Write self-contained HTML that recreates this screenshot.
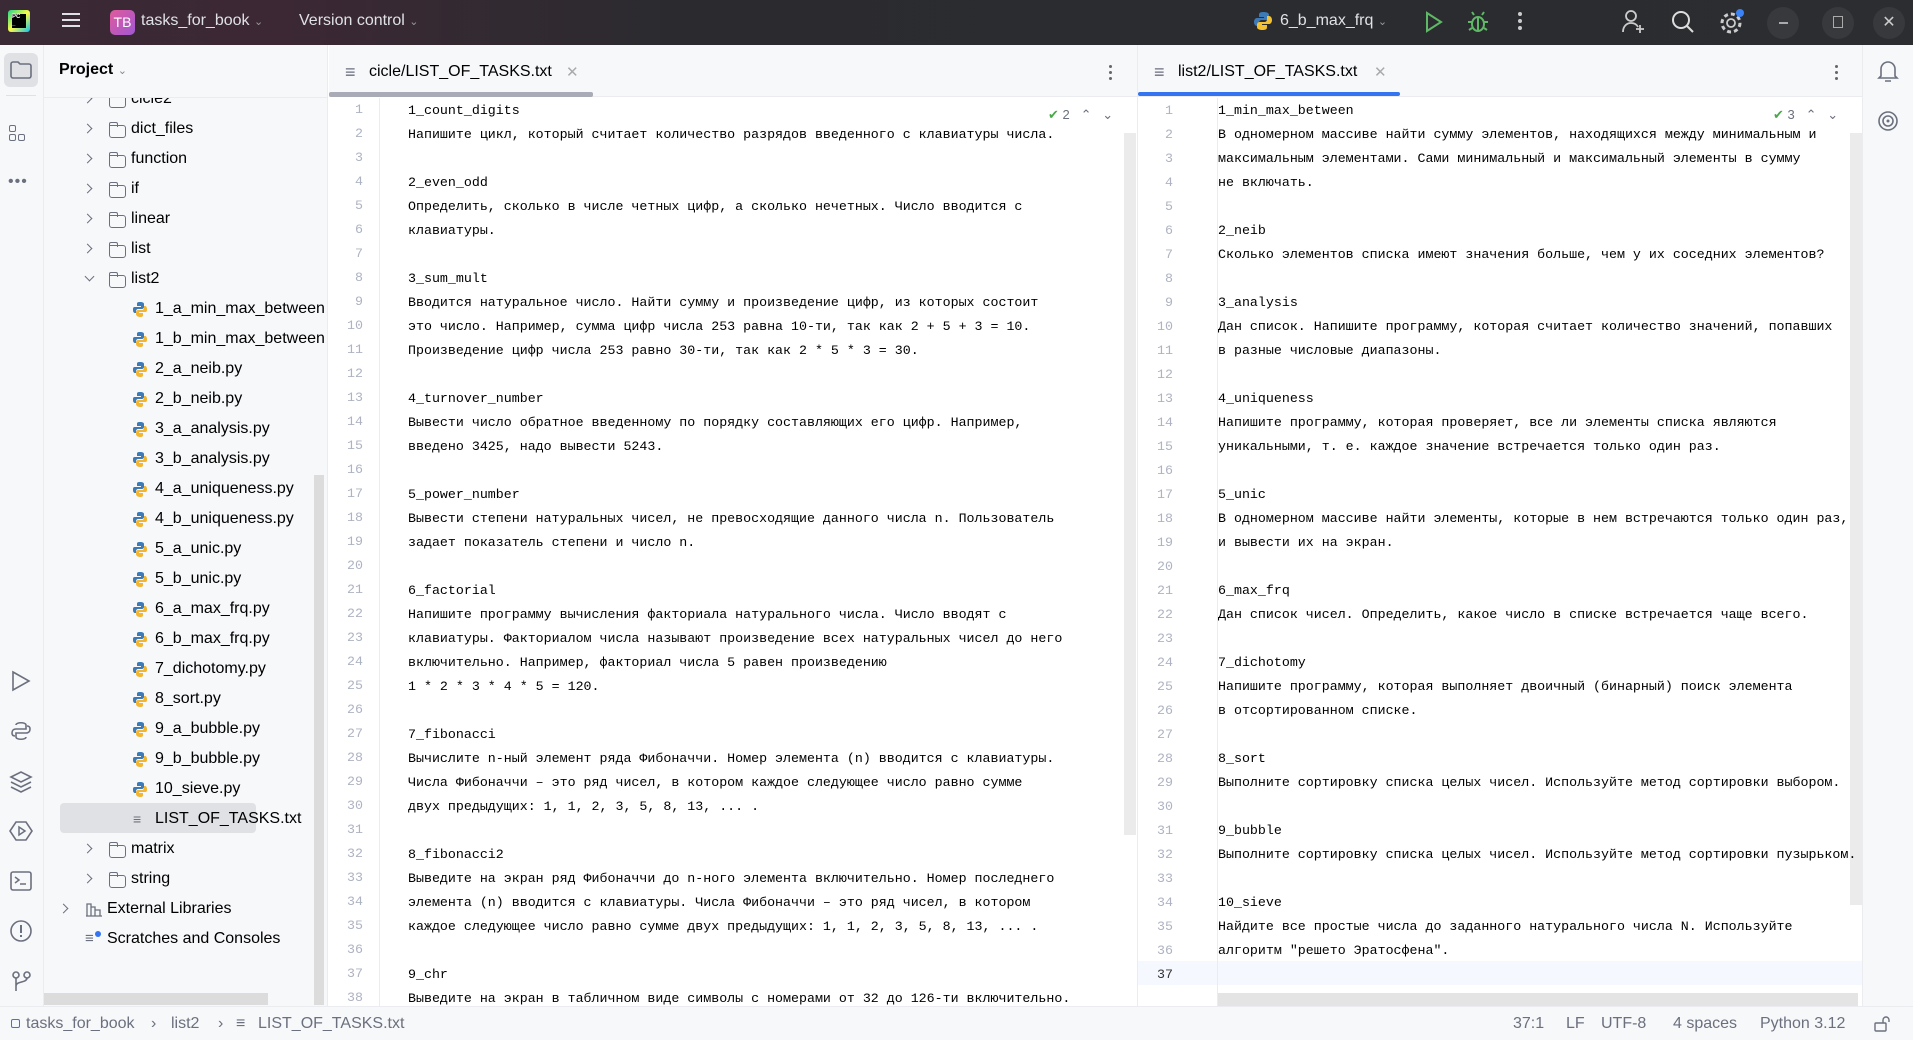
<!DOCTYPE html>
<html><head><meta charset="utf-8">
<style>
*{margin:0;padding:0;box-sizing:border-box}
body{width:1913px;height:1040px;overflow:hidden;background:#fff;font-family:"Liberation Sans","Noto Sans CJK SC",sans-serif;position:relative;color:#000}
.a{position:absolute}
#title{left:0;top:0;width:1913px;height:45px;background:linear-gradient(90deg,#3a2a36 0%,#3b2834 15%,#2b2b2f 35%,#2b2d30 100%);color:#dfe1e5;font-size:16px}
#lbar{left:0;top:45px;width:44px;height:961px;background:#f7f8fa;border-right:1px solid #ebecf0}
#rbar{left:1862px;top:45px;width:51px;height:961px;background:#f7f8fa;border-left:1px solid #ebecf0}
#proj{left:44px;top:45px;width:284px;height:961px;background:#f7f8fa;border-right:1px solid #ebecf0;overflow:hidden}
.row{position:absolute;height:30px;line-height:30px;font-size:16px;color:#000;white-space:nowrap}
.chev{position:absolute;width:7px;height:7px;border-right:1.5px solid #6c707e;border-bottom:1.5px solid #6c707e}
.fold{position:absolute;width:17px;height:13px;border:1.4px solid #6c707e;border-radius:3px;border-top-left-radius:1px}
.fold:before{content:"";position:absolute;left:-1.4px;top:-4px;width:7px;height:4px;border:1.4px solid #6c707e;border-bottom:none;border-radius:2px 2px 0 0}
.tabs{top:45px;height:52px;background:#f7f8fa;border-bottom:1px solid #ebecf0}
pre{font-family:"Liberation Mono","Noto Sans CJK SC",monospace;font-size:13.3px;line-height:24px;position:absolute;white-space:pre}
.ln{color:#aeb3c2;text-align:right}
#status{left:0;top:1006px;width:1913px;height:34px;background:#f7f8fa;border-top:1px solid #ebecf0;font-size:16px;color:#6c707e;line-height:34px}
</style></head><body>

<div id="title" class="a">
  <div class="a" style="left:8px;top:10px;width:22px;height:22px;background:linear-gradient(135deg,#21d789,#fcf84a 50%,#07c3f2);border-radius:3px"><div class="a" style="left:4px;top:4px;width:14px;height:14px;background:#000;color:#fff;font-size:6px;font-weight:bold;line-height:7px">PC<br>_</div></div>
  <div class="a" style="left:62px;top:13px;width:18px;height:2px;background:#dfe1e5;box-shadow:0 6px 0 #dfe1e5,0 12px 0 #dfe1e5"></div>
  <div class="a" style="left:110px;top:10px;width:25px;height:25px;border-radius:5px;background:linear-gradient(135deg,#e05a9a,#a157d4);color:#fff;font-size:14px;line-height:25px;text-align:center">TB</div>
  <div class="a" style="left:141px;top:12px">tasks_for_book <span style="font-size:11px;color:#9a9a9a">&#8964;</span></div>
  <div class="a" style="left:299px;top:12px">Version control <span style="font-size:11px;color:#9a9a9a">&#8964;</span></div>
  <svg class="a" style="left:1252px;top:10px" width="22" height="22" viewBox="0 0 22 22"><path d="M11 2c-4 0-4 2-4 3v2h5v1H5c-2 0-3 2-3 4s1 4 3 4h2v-3c0-2 1-3 3-3h4c2 0 3-1 3-3V5c0-2-2-3-6-3z" fill="#3d7ab8"/><path d="M11 20c4 0 4-2 4-3v-2h-5v-1h7c2 0 3-2 3-4s-1-4-3-4h-2v3c0 2-1 3-3 3H8c-2 0-3 1-3 3v2c0 2 2 3 6 3z" fill="#f2c232"/></svg>
  <div class="a" style="left:1280px;top:12px">6_b_max_frq <span style="font-size:11px;color:#9a9a9a">&#8964;</span></div>
  <svg class="a" style="left:1422px;top:10px" width="22" height="24"><path d="M5 3l14 9-14 9z" fill="none" stroke="#5fb865" stroke-width="2"/></svg>
  <svg class="a" style="left:1466px;top:9px" width="24" height="26"><ellipse cx="12" cy="15" rx="6" ry="7" fill="none" stroke="#5fb865" stroke-width="2"/><path d="M12 8v14M6 13H2M22 13h-4M6 19l-3 2M18 19l3 2M8 6l-2-3M16 6l2-3" stroke="#5fb865" stroke-width="2"/></svg>
  <div class="a" style="left:1518px;top:12px;width:4px;height:4px;background:#ccc;border-radius:2px;box-shadow:0 7px 0 #ccc,0 14px 0 #ccc"></div>
  <svg class="a" style="left:1620px;top:8px" width="26" height="28"><circle cx="11" cy="8" r="5" fill="none" stroke="#ccc" stroke-width="1.8"/><path d="M3 24c0-6 4-9 8-9s6 2 7 4M20 17v8M16 21h8" fill="none" stroke="#ccc" stroke-width="1.8"/></svg>
  <svg class="a" style="left:1670px;top:9px" width="26" height="26"><circle cx="11" cy="11" r="8" fill="none" stroke="#ddd" stroke-width="2"/><path d="M17 17l6 6" stroke="#ddd" stroke-width="2"/></svg>
  <svg class="a" style="left:1718px;top:8px" width="28" height="28"><circle cx="13" cy="15" r="4" fill="none" stroke="#ccc" stroke-width="1.8"/><circle cx="13" cy="15" r="9" fill="none" stroke="#ccc" stroke-width="3" stroke-dasharray="4 3"/><circle cx="22" cy="5" r="4" fill="#3b82f6"/></svg>
  <div class="a" style="left:1767px;top:7px;width:32px;height:32px;border-radius:16px;background:#38393d"></div><div class="a" style="left:1779px;top:22px;width:9px;height:1.5px;background:#aaa"></div>
  <div class="a" style="left:1822px;top:7px;width:32px;height:32px;border-radius:16px;background:#38393d"></div><div class="a" style="left:1833px;top:16px;width:10px;height:12px;border:1.5px solid #aaa"></div>
  <div class="a" style="left:1873px;top:7px;width:32px;height:32px;border-radius:16px;background:#38393d;color:#ccc;text-align:center;line-height:32px;font-size:16px">✕</div>
</div>

<div id="lbar" class="a">
  <div class="a" style="left:4px;top:8px;width:34px;height:34px;border-radius:6px;background:#dfe1e5"></div>
  <svg class="a" style="left:9px;top:15px" width="24" height="20"><path d="M2 4a2 2 0 0 1 2-2h5l2 2h9a2 2 0 0 1 2 2v10a2 2 0 0 1-2 2H4a2 2 0 0 1-2-2z" fill="none" stroke="#6c707e" stroke-width="1.6"/></svg>
  <div class="a" style="left:6px;top:50px;width:30px;height:1px;background:#dfe1e5"></div>
  <div class="a" style="left:9px;top:80px;width:7px;height:7px;border:1.5px solid #6c707e;border-radius:2px"></div>
  <div class="a" style="left:9px;top:89px;width:7px;height:7px;border:1.5px solid #6c707e;border-radius:2px"></div>
  <div class="a" style="left:18px;top:89px;width:7px;height:7px;border:1.5px solid #6c707e;border-radius:2px"></div>
  <div class="a" style="left:8px;top:128px;color:#6c707e;font-size:16px;letter-spacing:1px">•••</div>
  <svg class="a" style="left:7px;top:622px" width="28" height="28"><path d="M6 5l16 9-16 9z" fill="none" stroke="#6c707e" stroke-width="1.6"/></svg>
  <svg class="a" style="left:7px;top:672px" width="28" height="28"><path d="M9 8c0-3 10-3 10 0v4H9c-3 0-4 2-4 4s1 3 3 3M19 20c0 3-10 3-10 0v-4h10c3 0 4-2 4-4s-1-3-3-3" fill="none" stroke="#6c707e" stroke-width="1.6"/></svg>
  <svg class="a" style="left:7px;top:722px" width="28" height="28"><path d="M4 10l10-5 10 5-10 5zM4 15l10 5 10-5M4 20l10 5 10-5" fill="none" stroke="#6c707e" stroke-width="1.6"/></svg>
  <svg class="a" style="left:7px;top:772px" width="28" height="28"><path d="M9 5h10l6 9-6 9H9l-6-9z" fill="none" stroke="#6c707e" stroke-width="1.6"/><path d="M12 10l6 4-6 4z" fill="none" stroke="#6c707e" stroke-width="1.5"/></svg>
  <svg class="a" style="left:7px;top:822px" width="28" height="28"><rect x="4" y="5" width="20" height="18" rx="2" fill="none" stroke="#6c707e" stroke-width="1.6"/><path d="M8 10l4 3-4 3M13 17h6" fill="none" stroke="#6c707e" stroke-width="1.5"/></svg>
  <svg class="a" style="left:7px;top:872px" width="28" height="28"><circle cx="14" cy="14" r="10" fill="none" stroke="#6c707e" stroke-width="1.6"/><path d="M14 8v8M14 18v2" stroke="#6c707e" stroke-width="2"/></svg>
  <svg class="a" style="left:7px;top:922px" width="28" height="28"><circle cx="9" cy="8" r="3" fill="none" stroke="#6c707e" stroke-width="1.6"/><circle cx="20" cy="8" r="3" fill="none" stroke="#6c707e" stroke-width="1.6"/><path d="M9 11v13M20 11c0 5-11 3-11 8" fill="none" stroke="#6c707e" stroke-width="1.6"/></svg>
</div>

<div id="rbar" class="a">
  <svg class="a" style="left:12px;top:12px" width="26" height="28"><path d="M6 19V12a7 7 0 0 1 14 0v7l2 2H4zM10 24h6" fill="none" stroke="#6c707e" stroke-width="1.6"/></svg>
  <svg class="a" style="left:12px;top:62px" width="26" height="28"><circle cx="13" cy="14" r="9" fill="none" stroke="#6c707e" stroke-width="1.6"/><circle cx="13" cy="14" r="5" fill="none" stroke="#6c707e" stroke-width="1.6"/><circle cx="13" cy="14" r="1.5" fill="#6c707e"/></svg>
</div>

<div id="proj" class="a">
  <div class="a" style="left:15px;top:16px;font-size:16px;font-weight:bold;color:#000">Project <span style="font-weight:normal;font-size:11px;color:#888">&#8964;</span></div>
  <div class="a" style="left:0;top:52px;width:284px;height:1px;background:#ebecf0"></div>
  <div class="a" style="left:16px;top:758px;width:196px;height:30px;background:#dfe1e5;border-radius:4px"></div>
  <div class="a" style="left:270px;top:430px;width:10px;height:530px;background:#dcdcdc"></div>
  <div class="a" style="left:0;top:948px;width:224px;height:12px;background:#dcdcdc"></div>
</div>

<svg width="0" height="0" style="position:absolute"><defs><g id="py"><path d="M8 1C5 1 5 2 5 3v2h4v1H3C1 6 1 7 1 9s1 3 2 3h1v-2c0-1 1-2 2-2h4c1 0 2-1 2-2V3c0-1-1-2-4-2z" fill="#3d7ab8"/><path d="M8 16c3 0 3-1 3-2v-2H7v-1h6c2 0 2-1 2-3s-1-3-2-3h-1v2c0 1-1 2-2 2H6c-1 0-2 1-2 2v2c0 1 1 3 4 3z" fill="#f2b632"/></g></defs></svg>

<div class="a" style="left:0;top:98px;width:324px;height:908px;overflow:hidden">
<div class="row" style="top:-14px;left:0;width:324px"><div class="chev" style="left:84px;top:11px;transform:rotate(-45deg)"></div><div class="fold" style="left:109px;top:11px"></div><span class="a" style="left:131px">cicle2</span></div>
<div class="row" style="top:16px;left:0;width:324px"><div class="chev" style="left:84px;top:11px;transform:rotate(-45deg)"></div><div class="fold" style="left:109px;top:11px"></div><span class="a" style="left:131px">dict_files</span></div>
<div class="row" style="top:46px;left:0;width:324px"><div class="chev" style="left:84px;top:11px;transform:rotate(-45deg)"></div><div class="fold" style="left:109px;top:11px"></div><span class="a" style="left:131px">function</span></div>
<div class="row" style="top:76px;left:0;width:324px"><div class="chev" style="left:84px;top:11px;transform:rotate(-45deg)"></div><div class="fold" style="left:109px;top:11px"></div><span class="a" style="left:131px">if</span></div>
<div class="row" style="top:106px;left:0;width:324px"><div class="chev" style="left:84px;top:11px;transform:rotate(-45deg)"></div><div class="fold" style="left:109px;top:11px"></div><span class="a" style="left:131px">linear</span></div>
<div class="row" style="top:136px;left:0;width:324px"><div class="chev" style="left:84px;top:11px;transform:rotate(-45deg)"></div><div class="fold" style="left:109px;top:11px"></div><span class="a" style="left:131px">list</span></div>
<div class="row" style="top:166px;left:0;width:324px"><div class="chev" style="left:86px;top:9px;transform:rotate(45deg)"></div><div class="fold" style="left:109px;top:11px"></div><span class="a" style="left:131px">list2</span></div>
</div>

<div class="a" style="left:0;top:0;width:324px;height:1006px;overflow:hidden">
<div class="row" style="top:294px;left:0"><svg class="a" style="left:132px;top:7px" width="16" height="17"><use href="#py"/></svg><span class="a" style="left:155px">1_a_min_max_between.py</span></div>
<div class="row" style="top:324px;left:0"><svg class="a" style="left:132px;top:7px" width="16" height="17"><use href="#py"/></svg><span class="a" style="left:155px">1_b_min_max_between.py</span></div>
<div class="row" style="top:354px;left:0"><svg class="a" style="left:132px;top:7px" width="16" height="17"><use href="#py"/></svg><span class="a" style="left:155px">2_a_neib.py</span></div>
<div class="row" style="top:384px;left:0"><svg class="a" style="left:132px;top:7px" width="16" height="17"><use href="#py"/></svg><span class="a" style="left:155px">2_b_neib.py</span></div>
<div class="row" style="top:414px;left:0"><svg class="a" style="left:132px;top:7px" width="16" height="17"><use href="#py"/></svg><span class="a" style="left:155px">3_a_analysis.py</span></div>
<div class="row" style="top:444px;left:0"><svg class="a" style="left:132px;top:7px" width="16" height="17"><use href="#py"/></svg><span class="a" style="left:155px">3_b_analysis.py</span></div>
<div class="row" style="top:474px;left:0"><svg class="a" style="left:132px;top:7px" width="16" height="17"><use href="#py"/></svg><span class="a" style="left:155px">4_a_uniqueness.py</span></div>
<div class="row" style="top:504px;left:0"><svg class="a" style="left:132px;top:7px" width="16" height="17"><use href="#py"/></svg><span class="a" style="left:155px">4_b_uniqueness.py</span></div>
<div class="row" style="top:534px;left:0"><svg class="a" style="left:132px;top:7px" width="16" height="17"><use href="#py"/></svg><span class="a" style="left:155px">5_a_unic.py</span></div>
<div class="row" style="top:564px;left:0"><svg class="a" style="left:132px;top:7px" width="16" height="17"><use href="#py"/></svg><span class="a" style="left:155px">5_b_unic.py</span></div>
<div class="row" style="top:594px;left:0"><svg class="a" style="left:132px;top:7px" width="16" height="17"><use href="#py"/></svg><span class="a" style="left:155px">6_a_max_frq.py</span></div>
<div class="row" style="top:624px;left:0"><svg class="a" style="left:132px;top:7px" width="16" height="17"><use href="#py"/></svg><span class="a" style="left:155px">6_b_max_frq.py</span></div>
<div class="row" style="top:654px;left:0"><svg class="a" style="left:132px;top:7px" width="16" height="17"><use href="#py"/></svg><span class="a" style="left:155px">7_dichotomy.py</span></div>
<div class="row" style="top:684px;left:0"><svg class="a" style="left:132px;top:7px" width="16" height="17"><use href="#py"/></svg><span class="a" style="left:155px">8_sort.py</span></div>
<div class="row" style="top:714px;left:0"><svg class="a" style="left:132px;top:7px" width="16" height="17"><use href="#py"/></svg><span class="a" style="left:155px">9_a_bubble.py</span></div>
<div class="row" style="top:744px;left:0"><svg class="a" style="left:132px;top:7px" width="16" height="17"><use href="#py"/></svg><span class="a" style="left:155px">9_b_bubble.py</span></div>
<div class="row" style="top:774px;left:0"><svg class="a" style="left:132px;top:7px" width="16" height="17"><use href="#py"/></svg><span class="a" style="left:155px">10_sieve.py</span></div>
<div class="row" style="top:804px;left:0"><span class="a" style="left:133px;top:0;color:#6c707e;font-size:14px">&#8801;</span><span class="a" style="left:155px">LIST_OF_TASKS.txt</span></div>
<div class="row" style="top:834px;left:0;width:324px"><div class="chev" style="left:84px;top:11px;transform:rotate(-45deg)"></div><div class="fold" style="left:109px;top:11px"></div><span class="a" style="left:131px">matrix</span></div>
<div class="row" style="top:864px;left:0;width:324px"><div class="chev" style="left:84px;top:11px;transform:rotate(-45deg)"></div><div class="fold" style="left:109px;top:11px"></div><span class="a" style="left:131px">string</span></div>
<div class="row" style="top:894px;left:0;width:324px"><div class="chev" style="left:60px;top:11px;transform:rotate(-45deg)"></div><svg class="a" style="left:85px;top:7px" width="18" height="16"><path d="M2 15V3h4v12M6 15V6h4v9M10 15V9h5v6M1 15h16" fill="none" stroke="#6c707e" stroke-width="1.3"/></svg><span class="a" style="left:107px">External Libraries</span></div>
<div class="row" style="top:924px;left:0;width:324px"><span class="a" style="left:85px;color:#6c707e;font-size:15px">&#8801;</span><div class="a" style="left:95px;top:7px;width:6px;height:6px;border-radius:3px;background:#3574f0"></div><span class="a" style="left:107px">Scratches and Consoles</span></div>
</div>

<!-- left editor -->
<div class="a tabs" style="left:329px;width:808px"></div>
<div class="a" style="left:345px;top:62px;color:#6c707e;font-size:18px">&#8801;</div>
<div class="a" style="left:369px;top:63px;font-size:16px">cicle/LIST_OF_TASKS.txt</div>
<div class="a" style="left:566px;top:63px;font-size:15px;color:#aaa">✕</div>
<div class="a" style="left:329px;top:92px;width:264px;height:5px;background:#a9acb6;border-radius:2px"></div>
<div class="a" style="left:1109px;top:65px;width:3px;height:3px;background:#666;border-radius:2px;box-shadow:0 6px 0 #666,0 12px 0 #666"></div>
<div class="a" style="left:379px;top:98px;width:1px;height:908px;background:#ebecf0"></div>
<div class="a" style="left:1124px;top:133px;width:12px;height:702px;background:#ebebeb"></div>
<div class="a" style="left:1137px;top:45px;width:1px;height:961px;background:#ebecf0"></div>
<div class="a" style="left:1048px;top:107px;font-size:13px;color:#6c707e"><span style="color:#4aa84a">✔</span> 2 &nbsp;&nbsp;&#8963;&nbsp;&nbsp;&nbsp;&#8964;</div>
<pre class="a ln" style="left:335px;top:98px;width:28px">1
2
3
4
5
6
7
8
9
10
11
12
13
14
15
16
17
18
19
20
21
22
23
24
25
26
27
28
29
30
31
32
33
34
35
36
37
38</pre>
<div class="a" style="left:380px;top:98px;width:744px;height:908px;overflow:hidden">
<pre style="left:28px;top:1px">1_count_digits
Напишите цикл, который считает количество разрядов введенного с клавиатуры числа.

2_even_odd
Определить, сколько в числе четных цифр, а сколько нечетных. Число вводится с
клавиатуры.

3_sum_mult
Вводится натуральное число. Найти сумму и произведение цифр, из которых состоит
это число. Например, сумма цифр числа 253 равна 10-ти, так как 2 + 5 + 3 = 10.
Произведение цифр числа 253 равно 30-ти, так как 2 * 5 * 3 = 30.

4_turnover_number
Вывести число обратное введенному по порядку составляющих его цифр. Например,
введено 3425, надо вывести 5243.

5_power_number
Вывести степени натуральных чисел, не превосходящие данного числа n. Пользователь
задает показатель степени и число n.

6_factorial
Напишите программу вычисления факториала натурального числа. Число вводят с
клавиатуры. Факториалом числа называют произведение всех натуральных чисел до него
включительно. Например, факториал числа 5 равен произведению
1 * 2 * 3 * 4 * 5 = 120.

7_fibonacci
Вычислите n-ный элемент ряда Фибоначчи. Номер элемента (n) вводится с клавиатуры.
Числа Фибоначчи – это ряд чисел, в котором каждое следующее число равно сумме
двух предыдущих: 1, 1, 2, 3, 5, 8, 13, ... .

8_fibonacci2
Выведите на экран ряд Фибоначчи до n-ного элемента включительно. Номер последнего
элемента (n) вводится с клавиатуры. Числа Фибоначчи – это ряд чисел, в котором
каждое следующее число равно сумме двух предыдущих: 1, 1, 2, 3, 5, 8, 13, ... .

9_chr
Выведите на экран в табличном виде символы с номерами от 32 до 126-ти включительно.</pre>
</div>

<!-- right editor -->
<div class="a tabs" style="left:1138px;width:724px"></div>
<div class="a" style="left:1154px;top:62px;color:#6c707e;font-size:18px">&#8801;</div>
<div class="a" style="left:1178px;top:63px;font-size:16px">list2/LIST_OF_TASKS.txt</div>
<div class="a" style="left:1374px;top:63px;font-size:15px;color:#aaa">✕</div>
<div class="a" style="left:1138px;top:92px;width:262px;height:4px;background:#3574f0;border-radius:2px"></div>
<div class="a" style="left:1835px;top:65px;width:3px;height:3px;background:#666;border-radius:2px;box-shadow:0 6px 0 #666,0 12px 0 #666"></div>
<div class="a" style="left:1138px;top:961px;width:724px;height:24px;background:#f5f8fe"></div>
<div class="a" style="left:1217px;top:98px;width:1px;height:908px;background:#ebecf0"></div>
<div class="a" style="left:1850px;top:133px;width:12px;height:772px;background:#ebebeb"></div>
<div class="a" style="left:1218px;top:993px;width:640px;height:13px;background:#e4e4e4"></div>
<div class="a" style="left:1773px;top:107px;font-size:13px;color:#6c707e"><span style="color:#4aa84a">✔</span> 3 &nbsp;&nbsp;&#8963;&nbsp;&nbsp;&nbsp;&#8964;</div>
<pre class="a ln" style="left:1145px;top:99px;width:28px">1
2
3
4
5
6
7
8
9
10
11
12
13
14
15
16
17
18
19
20
21
22
23
24
25
26
27
28
29
30
31
32
33
34
35
36
<span style="color:#333">37</span></pre>
<div class="a" style="left:1218px;top:98px;width:644px;height:895px;overflow:hidden">
<pre style="left:0;top:1px">1_min_max_between
В одномерном массиве найти сумму элементов, находящихся между минимальным и
максимальным элементами. Сами минимальный и максимальный элементы в сумму
не включать.

2_neib
Сколько элементов списка имеют значения больше, чем у их соседних элементов?

3_analysis
Дан список. Напишите программу, которая считает количество значений, попавших
в разные числовые диапазоны.

4_uniqueness
Напишите программу, которая проверяет, все ли элементы списка являются
уникальными, т. е. каждое значение встречается только один раз.

5_unic
В одномерном массиве найти элементы, которые в нем встречаются только один раз,
и вывести их на экран.

6_max_frq
Дан список чисел. Определить, какое число в списке встречается чаще всего.

7_dichotomy
Напишите программу, которая выполняет двоичный (бинарный) поиск элемента
в отсортированном списке.

8_sort
Выполните сортировку списка целых чисел. Используйте метод сортировки выбором.

9_bubble
Выполните сортировку списка целых чисел. Используйте метод сортировки пузырьком.

10_sieve
Найдите все простые числа до заданного натурального числа N. Используйте
алгоритм "решето Эратосфена".</pre>
</div>

<div id="status" class="a">
  <div class="a" style="left:11px;top:12px;width:9px;height:9px;border:1.5px solid #3574f0;border-radius:2px"></div>
  <span class="a" style="left:26px">tasks_for_book</span>
  <span class="a" style="left:151px">&#8250;</span>
  <span class="a" style="left:171px">list2</span>
  <span class="a" style="left:218px">&#8250;</span>
  <span class="a" style="left:236px">&#8801;</span>
  <span class="a" style="left:258px">LIST_OF_TASKS.txt</span>
  <span class="a" style="left:1513px">37:1</span>
  <span class="a" style="left:1566px">LF</span>
  <span class="a" style="left:1601px">UTF-8</span>
  <span class="a" style="left:1673px">4 spaces</span>
  <span class="a" style="left:1760px">Python 3.12</span>
  <svg class="a" style="left:1873px;top:8px" width="18" height="18"><rect x="2" y="8" width="11" height="8" rx="1" fill="none" stroke="#6c707e" stroke-width="1.4"/><path d="M10 8V5a3 3 0 0 1 6 0v2" fill="none" stroke="#6c707e" stroke-width="1.4"/></svg>
</div>
</body></html>
